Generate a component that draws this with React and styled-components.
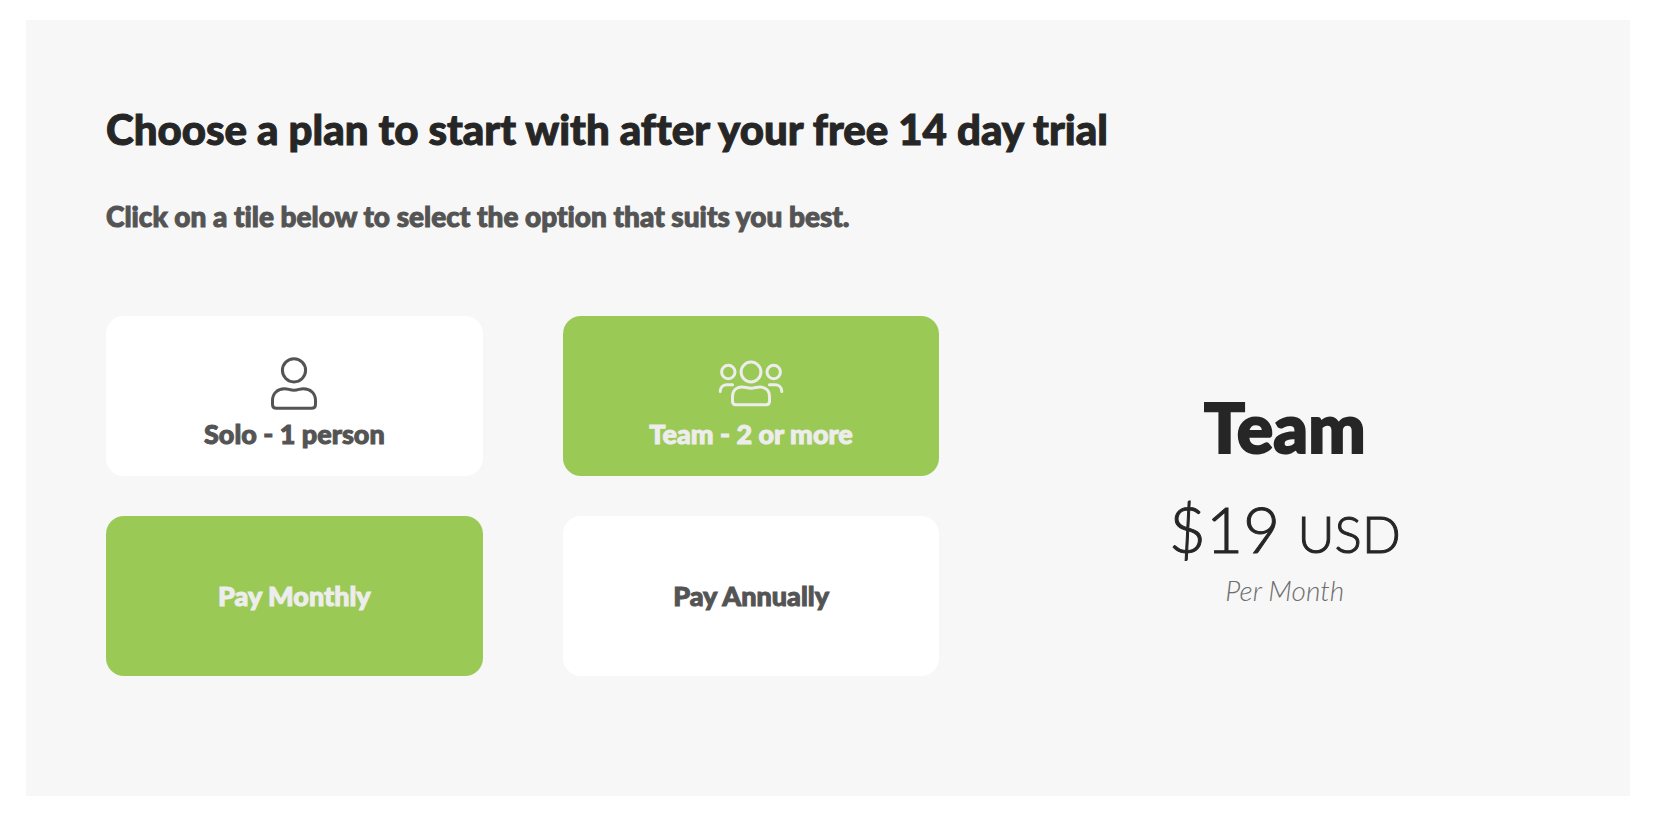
import React, { useState } from "react";
import styled, { createGlobalStyle, css } from "styled-components";

const GlobalStyle = createGlobalStyle`
  *, *::before, *::after { box-sizing: border-box; }
  body {
    margin: 0;
    background: #fff;
    color: #262626;
    font-family: Lato, "Open Sans", sans-serif;
    font-variant-ligatures: none;
  }
`;

const heavy = css`
  font-weight: 900;
  -webkit-text-stroke: 1px currentColor;
`;

const Panel = styled.main`
  margin: 20px 36px 24px 26px;
  padding: 80px 0 120px 80px;
  background: #f7f7f7;
`;

const Title = styled.h1`
  margin: 0;
  font-size: 42px;
  line-height: 58px;
  ${heavy}
`;

const Hint = styled.p`
  margin: 38px 0 80px;
  font-size: 28px;
  line-height: 40px;
  color: #545454;
  ${heavy}
`;

const Content = styled.div`
  display: grid;
  grid-template-columns: 35fr 29fr;
  align-items: center;
`;

const Options = styled.div`
  display: grid;
  gap: 40px;
`;

const TileRow = styled.div`
  display: grid;
  grid-template-columns: 1fr 1fr;
  gap: 80px;
`;

const Tile = styled.button`
  display: flex;
  flex-direction: column;
  align-items: center;
  justify-content: center;
  gap: 4px;
  height: 160px;
  padding: ${(p) => (p.$withIcon ? "16px" : "0")} 0 0;
  border: 0;
  border-radius: 18px;
  font: inherit;
  font-size: 27px;
  line-height: 36px;
  cursor: pointer;
  background: ${(p) => (p.$selected ? "#9bc956" : "#fff")};
  color: ${(p) => (p.$selected ? "#ededed" : "#545454")};
  ${heavy}
`;

const Icon = styled.svg`
  display: block;
  fill: none;
  stroke: currentColor;
  stroke-width: 3;
  stroke-linecap: round;
  stroke-linejoin: round;
`;

const Summary = styled.section`
  text-align: center;
`;

const PlanName = styled.h2`
  margin: 0;
  font-size: 68px;
  line-height: 80px;
  font-weight: 900;
  -webkit-text-stroke: 2px currentColor;
`;

const Price = styled.p`
  margin: 22px 0 0;
  font-size: 64px;
  line-height: 80px;
  font-weight: 300;
  -webkit-text-stroke: 1px currentColor;
`;

const Currency = styled.span`
  font-size: 51px;
`;

const Period = styled.p`
  margin: 0;
  font-size: 28px;
  line-height: 32px;
  font-weight: 300;
  font-style: italic;
  color: #6e6e6e;
`;

function PersonIcon() {
  return (
    <Icon width="48" height="56" viewBox="0 0 48 56" aria-hidden="true">
      <circle cx="24" cy="14.3" r="11.6" />
      <path d="M6.5 52.2H41.5q4 0 4-4v-3.7c0-7-5-11.8-12-11.8c-3.8 0-5.2 1.5-9.5 1.5s-5.7-1.5-9.5-1.5c-7 0-12 4.8-12 11.8v3.7q0 4 4 4z" />
    </Icon>
  );
}

function PeopleIcon() {
  return (
    <Icon width="68" height="56" viewBox="0 0 68 56" aria-hidden="true">
      <circle cx="34" cy="16" r="9.9" />
      <circle cx="11.3" cy="16" r="6.7" />
      <circle cx="56.7" cy="16" r="6.7" />
      <path d="M3.2 35.5c0-4.2 2.8-6.8 7-6.8h5.4M64.8 35.5c0-4.2-2.8-6.8-7-6.8h-5.4" />
      <path d="M19 48.7H49q3.5 0 3.5-3.5v-4.4c0-6.2-3.8-9.8-9.6-9.8c-3.3 0-5 1.2-8.9 1.2s-5.6-1.2-8.9-1.2c-5.8 0-9.6 3.6-9.6 9.8v4.4q0 3.5 3.5 3.5z" />
    </Icon>
  );
}

const plans = [
  { id: "solo", name: "Solo", label: "Solo - 1 person", icon: PersonIcon, monthly: 9, yearly: 90 },
  { id: "team", name: "Team", label: "Team - 2 or more", icon: PeopleIcon, monthly: 19, yearly: 190 },
];

const periods = [
  { id: "monthly", label: "Pay Monthly", caption: "Per Month" },
  { id: "yearly", label: "Pay Annually", caption: "Per Year" },
];

export default function App() {
  const [plan, setPlan] = useState(plans[1]);
  const [period, setPeriod] = useState(periods[0]);

  return (
    <>
      <GlobalStyle />
      <Panel>
        <Title>Choose a plan to start with after your free 14 day trial</Title>
        <Hint>Click on a tile below to select the option that suits you best.</Hint>
        <Content>
          <Options>
            <TileRow role="group" aria-label="Plan">
              {plans.map((item) => (
                <Tile
                  key={item.id}
                  type="button"
                  $withIcon
                  $selected={item === plan}
                  aria-pressed={item === plan}
                  onClick={() => setPlan(item)}
                >
                  <item.icon />
                  <span>{item.label}</span>
                </Tile>
              ))}
            </TileRow>
            <TileRow role="group" aria-label="Billing period">
              {periods.map((item) => (
                <Tile
                  key={item.id}
                  type="button"
                  $selected={item === period}
                  aria-pressed={item === period}
                  onClick={() => setPeriod(item)}
                >
                  <span>{item.label}</span>
                </Tile>
              ))}
            </TileRow>
          </Options>
          <Summary aria-live="polite">
            <PlanName>{plan.name}</PlanName>
            <Price>
              ${plan[period.id]} <Currency>USD</Currency>
            </Price>
            <Period>{period.caption}</Period>
          </Summary>
        </Content>
      </Panel>
    </>
  );
}
